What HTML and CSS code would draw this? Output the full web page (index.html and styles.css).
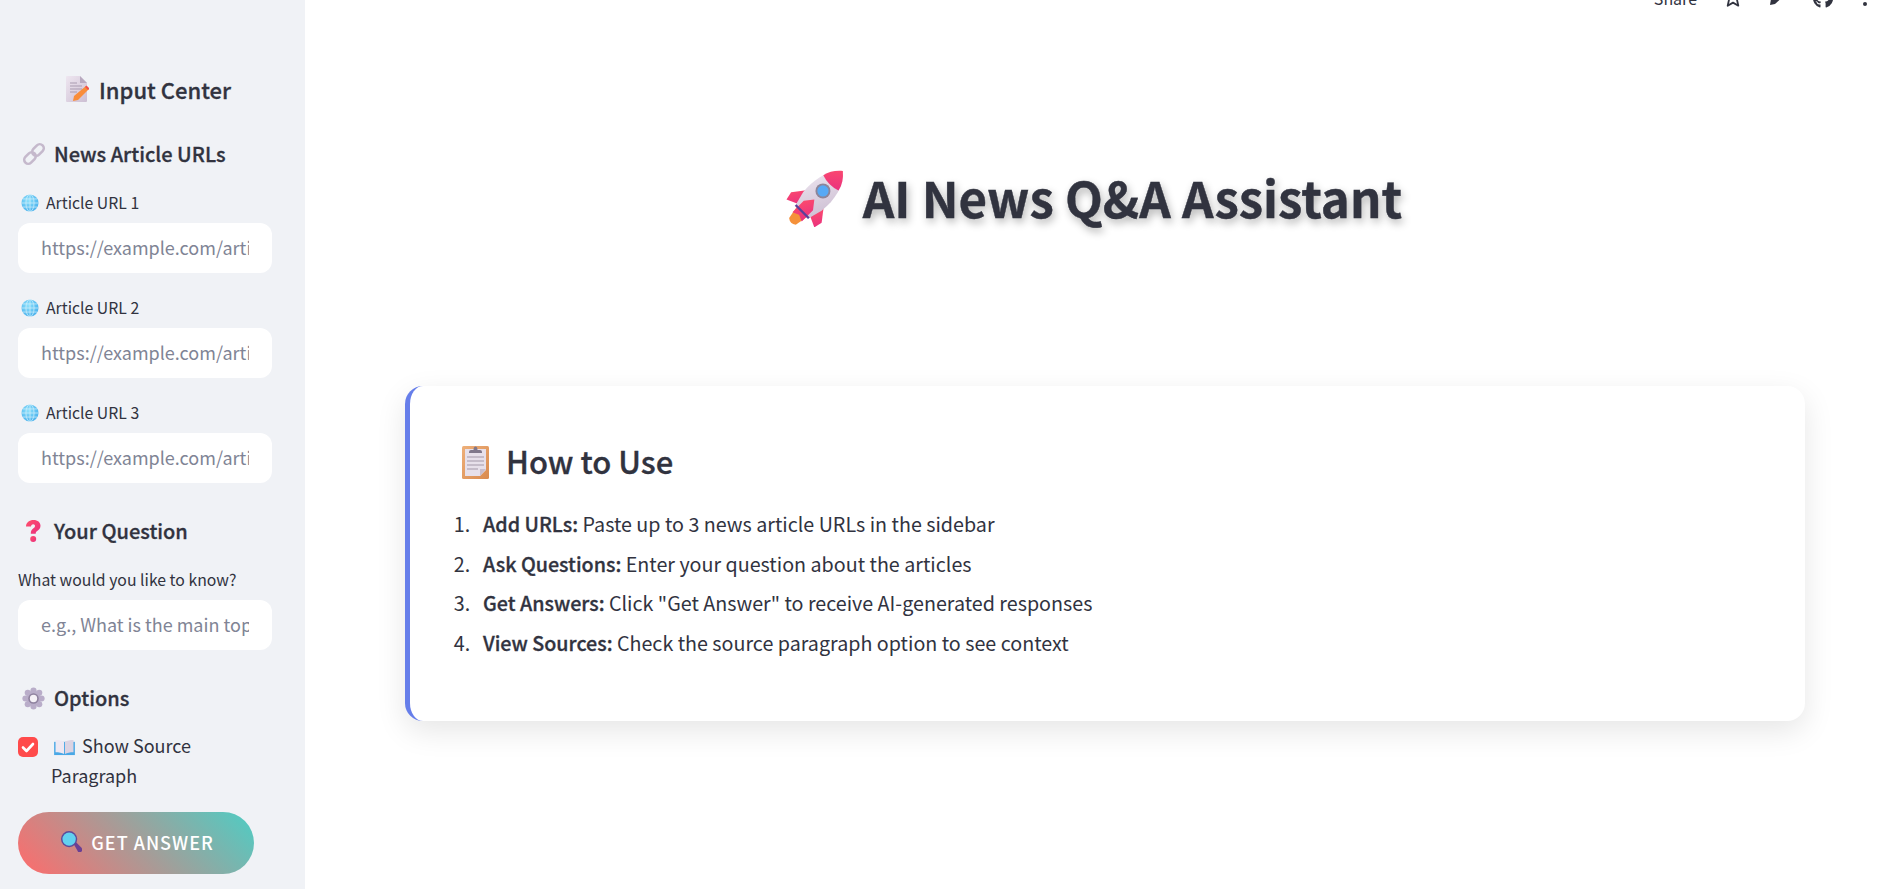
FILE: index.html
```html
<!DOCTYPE html>
<html lang="en">
<head>
    <meta charset="UTF-8">
    <meta name="viewport" content="width=device-width, initial-scale=1.0">
    <title>AI News Q&amp;A Assistant</title>
    <link rel="stylesheet" href="styles.css">
</head>
<body>
    <svg class="defs" aria-hidden="true">
        <defs>
            <linearGradient id="paper" x1="0" y1="0" x2="1" y2="1"><stop offset="0" stop-color="#eee6f0"/><stop offset="1" stop-color="#cdbfd3"/></linearGradient>
            <linearGradient id="red" x1="0" y1="0" x2="1" y2="1"><stop offset="0" stop-color="#ff4f6b"/><stop offset="1" stop-color="#e9307f"/></linearGradient>
            <radialGradient id="sky" cx=".4" cy=".35" r=".8"><stop offset="0" stop-color="#8ce0fb"/><stop offset="1" stop-color="#3fa9ea"/></radialGradient>
            <linearGradient id="board" x1="0" y1="0" x2="1" y2="1"><stop offset="0" stop-color="#eeb07a"/><stop offset="1" stop-color="#d98a4f"/></linearGradient>

            <symbol id="i-rocket" viewBox="0 0 64 64">
                <g transform="translate(0 2) rotate(45 32 32)">
                    <path d="M24 50h16l-3 16q-5 4-10 0z" fill="#f5913a"/>
                    <path d="M19 32L9 45l2 9 11-5z" fill="url(#red)"/>
                    <path d="M45 32l10 13-2 9-11-5z" fill="url(#red)"/>
                    <path d="M32 -10C20 0 16 18 18 36l4 15h20l4-15C48 18 44 0 32 -10z" fill="url(#paper)"/>
                    <path d="M32 -10C26 -5 22 1 20.500 8q11.500 4 23 0C42 1 38 -5 32 -10z" fill="url(#red)"/>
                    <circle cx="32" cy="20" r="8" fill="#8d8599"/>
                    <circle cx="32" cy="20" r="6" fill="#57a9f5"/>
                    <path d="M32 33L25 42v17l7-3 7 3V42z" fill="url(#red)"/>
                    <path d="M22 50h20v2.500H22z" fill="#5a3f9a"/>
                </g>
            </symbol>
            <symbol id="i-memo" viewBox="0 0 24 28">
                <path d="M2 1h13l7 7v18a1 1 0 0 1-1 1H2a1 1 0 0 1-1-1V2a1 1 0 0 1 1-1z" fill="url(#paper)"/>
                <path d="M15 1l7 7h-7z" fill="#b8a9bf"/>
                <path d="M5 8h7M5 11h12M5 14h12M5 17h7" stroke="#a99bb0" stroke-width="1"/>
                <path d="M21 11l3 3-11 11-5 1 1-5z" fill="#f98d3a"/>
                <path d="M20 12l3 3 1.500-1.500-3-3z" fill="#f2504a"/>
            </symbol>
            <symbol id="i-link" viewBox="0 0 24 24">
                <g fill="none" stroke="#c5b9cc" stroke-width="2.600">
                    <rect x="1.500" y="12" width="13" height="8" rx="4" transform="rotate(-45 8 16)"/>
                    <rect x="9.500" y="4" width="13" height="8" rx="4" transform="rotate(-45 16 8)"/>
                </g>
            </symbol>
            <symbol id="i-globe" viewBox="0 0 20 20">
                <circle cx="10" cy="10" r="9.500" fill="url(#sky)"/>
                <g fill="none" stroke="#d9f3fd" stroke-width=".9" opacity=".85">
                    <ellipse cx="10" cy="10" rx="4.500" ry="9.500"/>
                    <path d="M10 .5v19M.5 10h19M2 5.500h16M2 14.500h16"/>
                </g>
            </symbol>
            <symbol id="i-question" viewBox="0 0 20 24">
                <path d="M3 7.500C3 3.500 6.500 1 10.500 1c4.200 0 7 2.400 7 5.700 0 2.700-1.600 4.100-3.300 5.300-1 .7-1.500 1.300-1.500 2.700H7.800c0-2.700.8-3.900 2.300-5.100 1-.8 1.900-1.400 1.900-2.600 0-1-.7-1.700-1.800-1.700-1.300 0-2.100 1-2.200 2.300z" fill="url(#red)"/>
                <circle cx="10.200" cy="20" r="3" fill="url(#red)"/>
            </symbol>
            <symbol id="i-gear" viewBox="0 0 24 24">
                <g fill="#b9adc9">
                    <circle cx="12" cy="3.600" r="3.200"/><circle cx="12" cy="20.400" r="3.200"/>
                    <circle cx="3.600" cy="12" r="3.200"/><circle cx="20.400" cy="12" r="3.200"/>
                    <circle cx="6" cy="6" r="3.200"/><circle cx="18" cy="6" r="3.200"/>
                    <circle cx="6" cy="18" r="3.200"/><circle cx="18" cy="18" r="3.200"/>
                    <circle cx="12" cy="12" r="8"/>
                </g>
                <circle cx="12" cy="12" r="5.500" fill="#8f829f"/>
                <circle cx="12" cy="12" r="3.800" fill="#f5f1f7"/>
            </symbol>
            <symbol id="i-book" viewBox="0 0 22 18">
                <path d="M0 3h22v14H0z" fill="#49a8e6"/>
                <path d="M1.500 1c3.500 0 7 .5 9 2v13c-2-1.500-5.500-2-9-2z" fill="#eee8f2"/>
                <path d="M20.500 1c-3.500 0-7 .5-9 2v13c2-1.500 5.500-2 9-2z" fill="#dcd3e2"/>
            </symbol>
            <symbol id="i-search" viewBox="0 0 22 22">
                <path d="M13 13l2-2 7 7q1 2-.5 3.500T18 22z" fill="#6a3f94"/>
                <circle cx="8.500" cy="8.500" r="8.500" fill="#5b4a9a"/>
                <circle cx="8.500" cy="8.500" r="7" fill="#62d1f0"/>
            </symbol>
            <symbol id="i-clipboard" viewBox="0 0 27 35">
                <rect y="2" width="27" height="33" rx="1.500" fill="url(#board)"/>
                <path d="M3 5h21v21l-6 6H3z" fill="#e7e0ea"/>
                <path d="M24 25l-6 7v-7z" fill="#c9bdcc"/>
                <path d="M5 13h17M5 17h17M5 21h17M5 25h11" stroke="#a398a8" stroke-width="1"/>
                <path d="M7 8q0-2 2-2h2.500q0-3.500 2-3.500t2 3.500H18q2 0 2 2v1H7z" fill="#80778a"/>
            </symbol>
        </defs>
    </svg>

    <div class="app">
        <aside class="sidebar">
            <h2 class="sidebar-title"><svg class="ico ico-memo"><use href="#i-memo"/></svg>Input Center</h2>

            <h3 class="section first"><svg class="ico ico-link"><use href="#i-link"/></svg>News Article URLs</h3>
            <label class="field-label"><svg class="ico ico-globe"><use href="#i-globe"/></svg>Article URL 1</label>
            <input class="field" type="text" placeholder="https://example.com/article1">
            <label class="field-label"><svg class="ico ico-globe"><use href="#i-globe"/></svg>Article URL 2</label>
            <input class="field" type="text" placeholder="https://example.com/article2">
            <label class="field-label"><svg class="ico ico-globe"><use href="#i-globe"/></svg>Article URL 3</label>
            <input class="field" type="text" placeholder="https://example.com/article3">

            <h3 class="section"><svg class="ico ico-question"><use href="#i-question"/></svg>Your Question</h3>
            <label class="field-label question-label">What would you like to know?</label>
            <input class="field" type="text" placeholder="e.g., What is the main topic?">

            <h3 class="section"><svg class="ico ico-gear"><use href="#i-gear"/></svg>Options</h3>
            <label class="check">
                <span class="check-box">
                    <svg viewBox="0 0 20 20"><path d="M5 10.500l3.500 3.500L15 7" fill="none" stroke="#fff" stroke-width="2.600" stroke-linecap="round" stroke-linejoin="round"/></svg>
                </span>
                <span class="check-text"><svg class="ico ico-book"><use href="#i-book"/></svg>Show Source Paragraph</span>
            </label>

            <button class="answer-btn" type="button"><svg class="ico ico-search"><use href="#i-search"/></svg>Get Answer</button>
        </aside>

        <main class="main">
            <header class="toolbar">
                <span class="share">Share</span>
                <svg class="tool tool-star" viewBox="0 0 20 20"><path d="M10 1.500l2.500 5.600 6 .6-4.500 4 1.300 6L10 14.600l-5.300 3.100 1.300-6-4.500-4 6-.6z" fill="none" stroke="#31333f" stroke-width="1.800" stroke-linejoin="round"/></svg>
                <svg class="tool tool-pencil" viewBox="0 0 20 20"><path d="M5 20l1-6L16 4l5 5-11 10z" fill="#31333f"/></svg>
                <svg class="tool tool-github" viewBox="0 0 20 20"><path d="M10 0a10 10 0 0 0-3.200 19.500c.5.100.7-.2.700-.5v-2.500c-2.800.6-3.400-1.200-3.400-1.200-.5-1.200-1.100-1.500-1.100-1.500-.9-.6.100-.6.100-.6 1 .1 1.500 1 1.500 1 .9 1.500 2.300 1.100 2.900.8.100-.6.300-1.100.6-1.300-2.200-.3-4.500-1.100-4.500-4.900 0-1.100.4-2 1-2.700-.1-.3-.4-1.300.1-2.700 0 0 .8-.3 2.800 1a9.600 9.600 0 0 1 5 0c1.900-1.300 2.800-1 2.800-1 .5 1.400.2 2.400.1 2.700.6.700 1 1.600 1 2.700 0 3.800-2.300 4.600-4.500 4.900.4.300.7.900.7 1.900V19c0 .3.200.6.700.5A10 10 0 0 0 10 0z" fill="#31333f"/></svg>
                <svg class="tool tool-dots" viewBox="0 0 20 20"><circle cx="10" cy="17" r="2" fill="#31333f"/><circle cx="10" cy="10" r="2" fill="#31333f"/></svg>
            </header>

            <h1 class="page-title"><svg class="ico ico-rocket"><use href="#i-rocket"/></svg>AI News Q&amp;A Assistant</h1>

            <section class="card">
                <h2 class="card-title"><svg class="ico ico-clipboard"><use href="#i-clipboard"/></svg>How to Use</h2>
                <ol class="steps">
                    <li><strong>Add URLs:</strong> Paste up to 3 news article URLs in the sidebar</li>
                    <li><strong>Ask Questions:</strong> Enter your question about the articles</li>
                    <li><strong>Get Answers:</strong> Click "Get Answer" to receive AI-generated responses</li>
                    <li><strong>View Sources:</strong> Check the source paragraph option to see context</li>
                </ol>
            </section>
        </main>
    </div>
</body>
</html>
```
FILE: styles.css
```css
* {
    box-sizing: border-box;
}
html, body {
    margin: 0;
    height: 100%;
    overflow: hidden;
}
body {
    font-family: "Noto Sans CJK JP", "Noto Sans", sans-serif;
    color: #31333f;
    background: #fff;
}
.defs {
    display: block;
    width: 0;
    height: 0;
}
.app {
    display: flex;
    height: 889px;
}
.ico {
    flex: none;
    vertical-align: middle;
}

/* sidebar */
.sidebar {
    width: 305px;
    flex: none;
    background: #f0f2f6;
    padding: 74px 33px 0 18px;
}
.sidebar-title {
    margin: 0;
    font-size: 22px;
    line-height: 30px;
    font-weight: 500;
    -webkit-text-stroke: 0.3px #31333f;
    display: flex;
    align-items: center;
    justify-content: center;
    padding-left: 6px;
}
.ico-memo {
    width: 24px;
    height: 28px;
    margin-right: 10px;
}
.section {
    margin: 35px 0 0;
    height: 28px;
    padding: 0 0 2px 4px;
    font-size: 20px;
    line-height: 26px;
    font-weight: 500;
    -webkit-text-stroke: 0.3px #31333f;
    display: flex;
    align-items: center;
}
.section.first {
    margin-top: 36px;
    padding-bottom: 0;
}
.ico-link {
    width: 24px;
    height: 24px;
    margin-right: 8px;
}
.ico-question {
    width: 20px;
    height: 24px;
    margin: 0 11px 0 1px;
}
.ico-gear {
    width: 23px;
    height: 23px;
    margin-right: 9px;
}
.field-label {
    display: flex;
    align-items: center;
    height: 20px;
    margin: 25px 0 10px;
    padding: 0 0 1px 3px;
    font-size: 15.800px;
    line-height: 18px;
}
.question-label {
    margin-top: 24px;
    padding-left: 0;
}
.ico-globe {
    width: 18px;
    height: 18px;
    margin: 1px 7px 0 0;
}
.field {
    display: block;
    width: 100%;
    height: 50px;
    border: none;
    border-radius: 12px;
    padding: 0 23px 2px;
    background: #fff;
    font: inherit;
    font-size: 18px;
    color: #31333f;
    outline: none;
}
.field::placeholder {
    color: #808495;
    opacity: 1;
}
.check {
    display: flex;
    gap: 13px;
    margin-top: 18px;
    font-size: 18px;
    line-height: 30px;
}
.check-box {
    flex: none;
    width: 20px;
    height: 20px;
    margin-top: 6px;
    border-radius: 5px;
    background: #ff4b4b;
}
.check-box svg {
    display: block;
}
.check-text {
    width: 160px;
    margin-top: -1px;
}
.ico-book {
    width: 21px;
    height: 17px;
    margin: -2px 7px 0 3px;
}
.answer-btn {
    display: flex;
    align-items: center;
    justify-content: center;
    width: 236px;
    height: 62px;
    margin-top: 22px;
    padding: 0 0 3px 3px;
    border: none;
    border-radius: 31px;
    background: linear-gradient(45deg, #ff6b6b, #4ecdc4);
    color: #fff;
    font: inherit;
    font-size: 18px;
    font-weight: 500;
    letter-spacing: 1px;
    text-transform: uppercase;
    cursor: pointer;
}
.ico-search {
    width: 21px;
    height: 21px;
    margin-right: 9px;
}

/* main area */
.main {
    flex: 1;
    min-width: 0;
}
.toolbar {
    display: flex;
    justify-content: flex-end;
    align-items: flex-end;
    height: 8px;
    overflow: hidden;
    gap: 22px;
    padding-right: 7px;
}
.share {
    font-size: 16px;
    line-height: 20px;
    margin-right: 4px;
}
.tool {
    width: 20px;
    height: 20px;
    flex: none;
}
.tool-pencil {
    margin: 0 6px 3px 0;
}
.tool-dots {
    margin-bottom: 1px;
}
.page-title {
    display: flex;
    align-items: center;
    justify-content: center;
    margin: 154px 0 0;
    height: 70px;
    font-size: 49.200px;
    line-height: 70px;
    font-weight: 700;
    -webkit-text-stroke: 0.4px #31333f;
    text-shadow: 2px 4px 8px rgba(0, 0, 0, 0.3);
}
.ico-rocket {
    width: 60px;
    height: 60px;
    margin-right: 18px;
}
.card {
    margin: 154px 77px 0 100px;
    height: 335px;
    padding: 51px 52px 0;
    background: #fff;
    border-left: 5px solid #667eea;
    border-radius: 18px;
    box-shadow: 0 10px 30px rgba(0, 0, 0, 0.1);
}
.card-title {
    display: flex;
    align-items: center;
    margin: 0;
    font-size: 31px;
    line-height: 48px;
    font-weight: 500;
    -webkit-text-stroke: 0.3px #31333f;
}
.ico-clipboard {
    width: 27px;
    height: 35px;
    margin-right: 17px;
}
.steps {
    margin: 25px 0 0;
    padding-left: 21px;
    font-size: 19.700px;
    line-height: 28.800px;
}
.steps li {
    margin-bottom: 10.800px;
}
.steps li::marker {
    content: counter(list-item) ".\00a0\00a0\2009";
}
.steps strong {
    font-weight: 500;
    -webkit-text-stroke: 0.3px #31333f;
}
```
